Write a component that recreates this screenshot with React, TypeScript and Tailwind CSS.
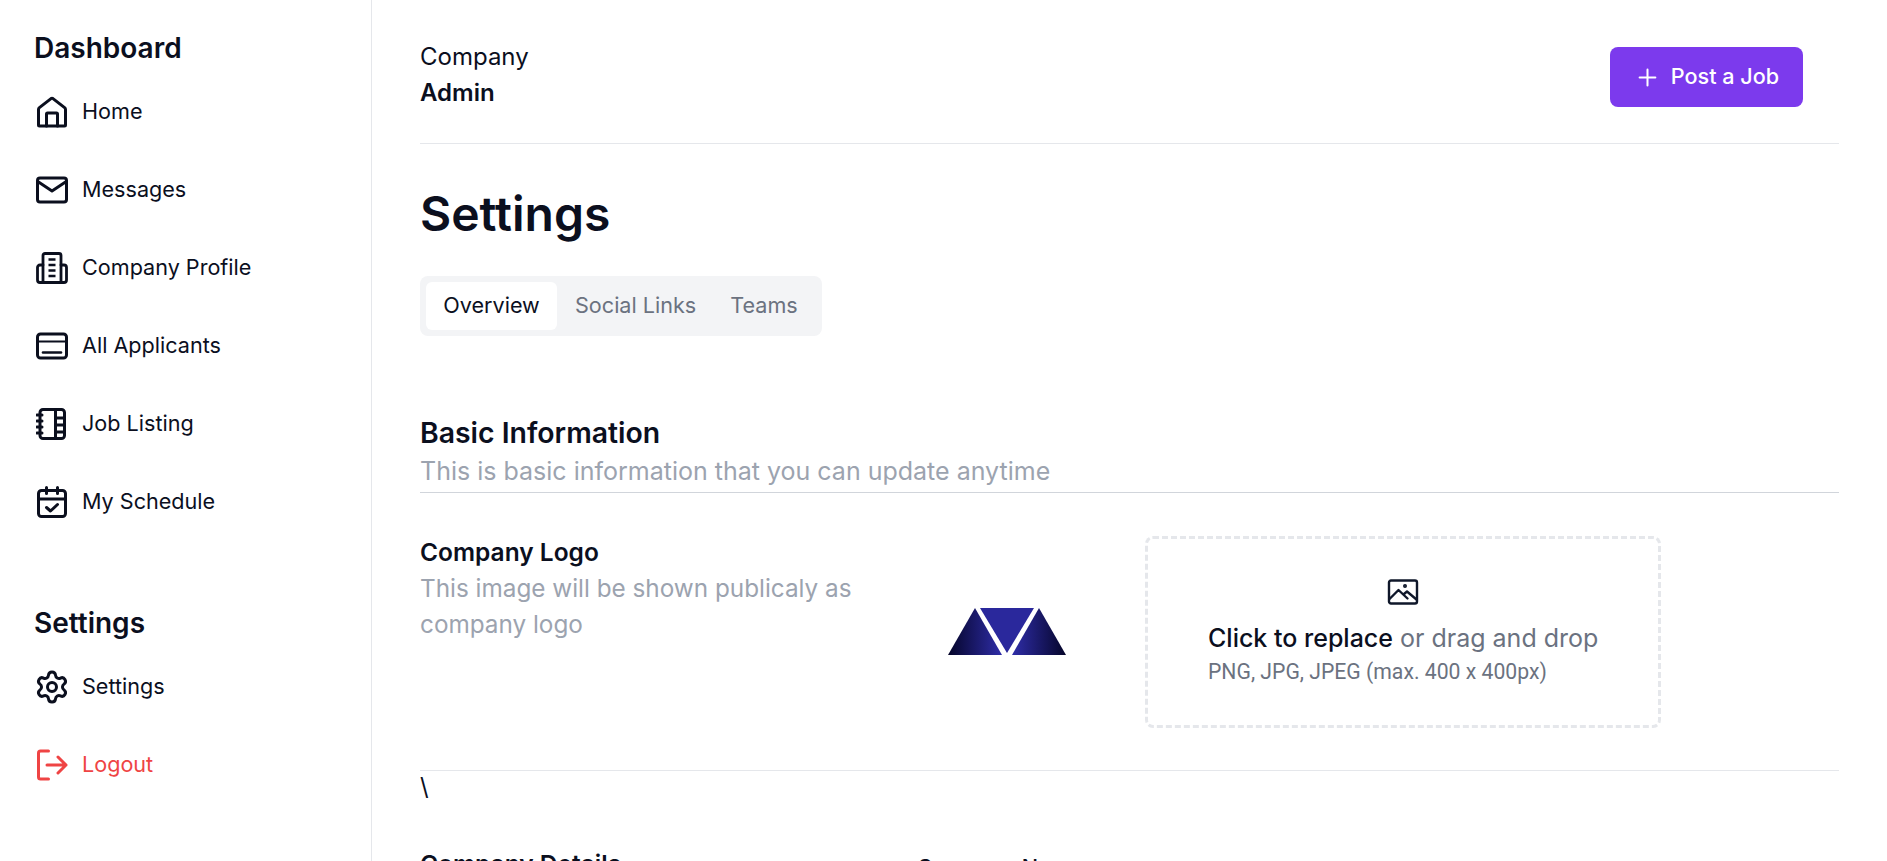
import type { ReactNode } from 'react';
import { Plus, Settings } from 'lucide-react';

const font = { fontFamily: 'Inter, sans-serif' };

const HomeIcon = () => (
  <svg viewBox="0 0 32 32" className="h-8 w-8" fill="none" stroke="currentColor" strokeWidth="3" strokeLinejoin="round" strokeLinecap="round">
    <path d="M2.5 29V13.5c0-.8.3-1.4.9-1.9L15 2.600c.6-.4 1.400-.4 2 0l11.600 9c.6.5.9 1.100.9 1.900V29c0 .6-.5 1-1 1h-25c-.5 0-1-.4-1-1z" />
    <path d="M10.500 30V18c0-.6.4-1 1-1h9c.6 0 1 .4 1 1v12" />
  </svg>
);

const MailIcon = () => (
  <svg viewBox="0 0 32 32" className="h-8 w-8" fill="none" stroke="currentColor" strokeWidth="3" strokeLinejoin="round" strokeLinecap="round">
    <rect x="1.500" y="4" width="29" height="24" rx="2.500" />
    <path d="M2.500 8L16 17l13.500-9" />
  </svg>
);

const BuildingIcon = () => (
  <svg viewBox="0 0 32 32" className="h-8 w-8" fill="none" stroke="currentColor" strokeWidth="2.800" strokeLinejoin="round" strokeLinecap="round">
    <path d="M7 30V3.500c0-1.100.9-2 2-2h14c1.100 0 2 .9 2 2V30" />
    <path d="M7 13H4c-1.400 0-2.500 1.100-2.500 2.500V28c0 1.400 1.100 2.500 2.500 2.500h24c1.400 0 2.500-1.100 2.500-2.500V15.500c0-1.400-1.100-2.500-2.500-2.500h-3" />
    <path d="M12.500 7.500h7M12.500 13h7M12.500 18.500h7M12.500 24h7" strokeWidth="2.400" strokeLinecap="butt" />
  </svg>
);

const CardIcon = () => (
  <svg viewBox="0 0 32 32" className="h-8 w-8" fill="none" stroke="currentColor" strokeWidth="3" strokeLinejoin="round" strokeLinecap="round">
    <rect x="1.500" y="4" width="29" height="24" rx="3" />
    <path d="M2 11.500h28" strokeWidth="2.200" />
    <path d="M7 22.500h18" strokeWidth="2.600" />
  </svg>
);

const NotebookIcon = () => (
  <svg viewBox="0 0 32 32" className="h-8 w-8" fill="none" stroke="currentColor" strokeWidth="3" strokeLinejoin="round" strokeLinecap="round">
    <rect x="4" y="1.500" width="24.500" height="29" rx="3" />
    <path d="M1 7h5M1 13h5M1 19h5M1 25h5M19.500 2v28M19.500 10h8M19.500 17h8M19.500 24h8" />
  </svg>
);

const CalendarIcon = () => (
  <svg viewBox="0 0 32 32" className="h-8 w-8" fill="none" stroke="currentColor" strokeWidth="3" strokeLinejoin="round" strokeLinecap="round">
    <rect x="2.500" y="4.500" width="27" height="26" rx="3" />
    <path d="M10.500 1.500v6M21.500 1.500v6M3 13h26" />
    <path d="M10.500 21.500l4 3.500 7-6.500" />
  </svg>
);

const LogoutIcon = () => (
  <svg viewBox="0 0 32 32" className="h-8 w-8" fill="none" stroke="currentColor" strokeWidth="3" strokeLinejoin="round" strokeLinecap="round">
    <path d="M12.500 2H4.500C3.300 2 2.500 2.800 2.500 4v24c0 1.200.8 2 2 2h8" />
    <path d="M11 16h19M22 8l8 8-8 8" />
  </svg>
);

const ImageIcon = () => (
  <svg viewBox="0 0 32 28" className="h-7 w-8 text-[#0f172a]" fill="none" stroke="currentColor" strokeWidth="2.400" strokeLinejoin="round" strokeLinecap="round">
    <rect x="2" y="2.500" width="28" height="23" rx="2" />
    <path d="M2.500 21l9-9 9 8.500M17 16l3-2.500 9.500 8" />
    <circle cx="18" cy="8" r="0.800" fill="currentColor" />
  </svg>
);

const Logo = () => (
  <svg viewBox="0 0 118 47" className="h-[47px] w-[118px]">
    <defs>
      <linearGradient id="left" x1="0" x2="1" y1="0" y2="0">
        <stop offset="0" stopColor="#05052a" />
        <stop offset="1" stopColor="#2f2da8" />
      </linearGradient>
      <linearGradient id="right" x1="1" x2="0" y1="0" y2="0">
        <stop offset="0" stopColor="#05052a" />
        <stop offset="1" stopColor="#2f2da8" />
      </linearGradient>
    </defs>
    <polygon points="27,0 0,47 54,47" fill="url(#left)" />
    <polygon points="32,0 86,0 59,45" fill="#2a289c" />
    <polygon points="91,0 64,47 118,47" fill="url(#right)" />
  </svg>
);

const NavItem = ({ icon, label, danger }: { icon: ReactNode; label: string; danger?: boolean }) => (
  <div className={`flex h-[78px] items-center gap-[14px] pl-[2px] text-[21.600px] ${danger ? 'text-[#ef4444]' : 'text-[#0b0f1e]'}`}>
    {icon}
    <span className="-mt-[1px]">{label}</span>
  </div>
);

export default function App() {
  return (
    <div style={font} className="flex h-screen overflow-hidden bg-white text-[#0b0f1e]">
      <aside className="w-[372px] shrink-0 border-r border-[#e5e7eb] pl-[34px] pt-[31px]">
        <h2 className="text-[28px] leading-[34px] font-semibold">Dashboard</h2>
        <nav className="mt-[8px]">
          <NavItem icon={<HomeIcon />} label="Home" />
          <NavItem icon={<MailIcon />} label="Messages" />
          <NavItem icon={<BuildingIcon />} label="Company Profile" />
          <NavItem icon={<CardIcon />} label="All Applicants" />
          <NavItem icon={<NotebookIcon />} label="Job Listing" />
          <NavItem icon={<CalendarIcon />} label="My Schedule" />
        </nav>
        <h2 className="mt-[65px] text-[28px] leading-[34px] font-semibold">Settings</h2>
        <nav className="mt-[8px]">
          <NavItem icon={<Settings className="-m-[2px] h-9 w-9" strokeWidth={2} />} label="Settings" />
          <NavItem icon={<LogoutIcon />} label="Logout" danger />
        </nav>
      </aside>

      <main className="flex-1 px-[48px]">
        <header className="flex h-[144px] items-start justify-between border-b border-[#e5e7eb] pt-[39px] pr-[36px]">
          <div>
            <div className="text-[24px] leading-[36px]">Company</div>
            <div className="text-[24px] leading-[36px] font-semibold">Admin</div>
          </div>
          <button className="mt-[8px] flex h-[60px] w-[193px] items-center justify-center gap-[10px] rounded-lg bg-[#7c3aed] text-[21.600px] font-medium text-white">
            <Plus className="h-[27px] w-[27px]" strokeWidth={1.800} />
            <span className="-mt-[2px]">Post a Job</span>
          </button>
        </header>

        <h1 className="mt-[40px] text-[48px] leading-[60px] font-semibold">Settings</h1>

        <div className="mt-[32px] flex h-[60px] w-[402px] items-center rounded-lg bg-[#f3f4f6] px-[6px] text-[21.600px] text-[#6b7280]">
          <div className="flex h-[48px] w-[131px] items-center justify-center rounded-md bg-white pb-[2px] text-[#0b0f1e]">Overview</div>
          <div className="ml-[18px] pb-[2px]">Social Links</div>
          <div className="ml-[34px] pb-[2px]">Teams</div>
        </div>

        <section className="mt-[79px] border-b border-[#d1d5db] pb-[3px]">
          <h3 className="text-[28.400px] leading-[36px] font-semibold">Basic Information</h3>
          <p className="mt-[2px] text-[25px] leading-[36px] text-[#9ca3af]">This is basic information that you can update anytime</p>
        </section>

        <section className="flex h-[278px] items-start border-b border-[#e5e7eb] pt-[43px]">
          <div className="-mt-[2px] w-[528px]">
            <h4 className="text-[24.500px] leading-[36px] font-semibold">Company Logo</h4>
            <p className="w-[450px] text-[24.300px] leading-[36px] text-[#9ca3af]">This image will be shown publicaly as company logo</p>
          </div>
          <div className="mt-[72px] w-[197px]">
            <Logo />
          </div>
          <div className="flex h-[192px] w-[516px] flex-col items-start rounded-lg border-[3px] border-dashed border-[#e5e7eb] pl-[60px] pt-[39px]">
            <div className="flex w-[389px] justify-center"><ImageIcon /></div>
            <p className="mt-[13px] text-[25px] leading-[38px]">
              <span className="font-medium">Click to replace</span> <span className="text-[#6b7280]">or drag and drop</span>
            </p>
            <p className="text-[21.200px] leading-[30px] text-[#6b7280]" style={{ fontFamily: 'Roboto, sans-serif' }}>PNG, JPG, JPEG (max. 400 x 400px)</p>
          </div>
        </section>

        <div className="text-[24px] leading-[32px]">\</div>

        <section className="mt-[43px] flex">
          <h3 className="w-[497px] text-[24.500px] leading-[36px] font-semibold">Company Details</h3>
          <div className="mt-[3px] text-[21.600px] leading-[36px] font-medium">Company Name</div>
        </section>
      </main>
    </div>
  );
}
